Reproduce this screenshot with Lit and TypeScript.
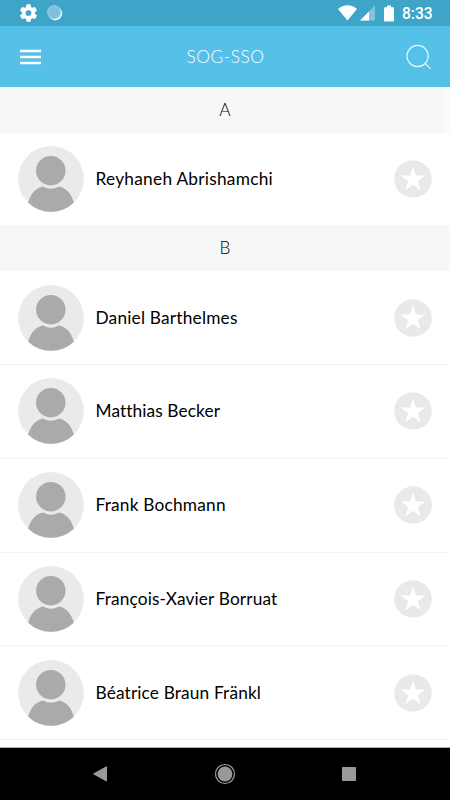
import { LitElement, html, css, svg } from "lit";
import { customElement, property } from "lit/decorators.js";
import { styleMap } from "lit/directives/style-map.js";

interface Person {
  name: string;
  tracking: number;
}

interface Section {
  letter: string;
  people: Person[];
}

const SECTIONS: Section[] = [
  { letter: "A", people: [{ name: "Reyhaneh Abrishamchi", tracking: 0.26 }] },
  {
    letter: "B",
    people: [
      { name: "Daniel Barthelmes", tracking: 0.2 },
      { name: "Matthias Becker", tracking: 0.1 },
      { name: "Frank Bochmann", tracking: 0.2 },
      { name: "François-Xavier Borruat", tracking: 0.14 },
      { name: "Béatrice Braun Fränkl", tracking: 0.14 },
    ],
  },
];

const dottedRing = svg`<circle cx="7.1" cy="7.1" r="6.4" fill="none" stroke="#b5dcea" stroke-width="1" stroke-dasharray="1 .8"/>`;

@customElement("status-bar")
export class StatusBar extends LitElement {
  static styles = css`
    :host {
      display: flex;
      align-items: center;
      justify-content: space-between;
      height: 26px;
      box-sizing: border-box;
      padding: 0 17px 0 20px;
      background: #3ea5c9;
      color: #fff;
    }
    .group {
      display: flex;
      align-items: center;
    }
    svg {
      display: block;
    }
    .sync {
      margin-left: 10px;
    }
    .signal {
      margin-left: 3px;
    }
    .battery {
      margin-left: 9px;
    }
    .clock {
      margin-left: 8px;
      width: 31px;
      font: 500 15.6px/26px Roboto, sans-serif;
      white-space: nowrap;
      padding-top: 2px;
    }
  `;

  render() {
    return html`
      <div class="group">
        <svg width="17" height="18" viewBox="2.2 1.6 19.6 20.8">
          <path fill="#fff" d="M19.43 12.98c.04-.32.07-.64.07-.98s-.03-.66-.07-.98l2.11-1.65c.19-.15.24-.42.12-.64l-2-3.46c-.12-.22-.39-.3-.61-.22l-2.49 1c-.52-.4-1.08-.73-1.69-.98l-.38-2.65C14.46 2.18 14.25 2 14 2h-4c-.25 0-.46.18-.49.42l-.38 2.65c-.61.25-1.17.59-1.69.98l-2.49-1c-.23-.09-.49 0-.61.22l-2 3.46c-.13.22-.07.49.12.64l2.11 1.65c-.04.32-.07.65-.07.98s.03.66.07.98l-2.11 1.65c-.19.15-.24.42-.12.64l2 3.46c.12.22.39.3.61.22l2.49-1c.52.4 1.08.73 1.69.98l.38 2.65c.03.24.24.42.49.42h4c.25 0 .46-.18.49-.42l.38-2.65c.61-.25 1.17-.59 1.69-.98l2.49 1c.23.09.49 0 .61-.22l2-3.46c.12-.22.07-.49-.12-.64l-2.11-1.65zM12 15.3a3.3 3.3 0 1 1 0-6.6 3.3 3.3 0 0 1 0 6.6z"/>
        </svg>
        <svg class="sync" width="16" height="16" viewBox="0 0 16 16">
          <circle cx="8.2" cy="8.4" r="7" fill="#e9f6fa"/>
          <circle cx="7.1" cy="7.1" r="6.9" fill="#7fc1da"/>
          ${dottedRing}
        </svg>
      </div>
      <div class="group">
        <svg width="19" height="16" viewBox="0 0 19 16">
          <path fill="#fff" d="M9.5 15.5 0 3.9C2.5 1.6 6 .2 9.5.2S16.500 1.600 19 3.900Z"/>
        </svg>
        <svg class="signal" width="15" height="16" viewBox="0 0 15 16">
          <path fill="#83c4dc" d="M15 .5V15.500H0Z"/>
          <path fill="#fff" d="M9 6.500V15.500H0Z"/>
        </svg>
        <svg class="battery" width="10" height="17" viewBox="0 0 10 17">
          <path fill="#fff" d="M3 .5h4v1.700h2q1 0 1 1V15.500q0 1-1 1H1q-1 0-1-1V3.200q0-1 1-1h2Z"/>
        </svg>
        <div class="clock">8:33</div>
      </div>
    `;
  }
}

@customElement("title-bar")
export class TitleBar extends LitElement {
  @property() heading = "";

  static styles = css`
    :host {
      display: grid;
      grid-template-columns: 40px 1fr 40px;
      align-items: center;
      height: 61px;
      box-sizing: border-box;
      padding: 0 19px 0 20px;
      background: #55c1e8;
    }
    svg {
      display: block;
    }
    .find {
      justify-self: end;
    }
    .heading {
      text-align: center;
      color: #fff;
      font: 300 17.3px/24px Lato, sans-serif;
      letter-spacing: 0.55px;
    }
  `;

  render() {
    return html`
      <svg width="21" height="16" viewBox="0 0 21 16">
        <path fill="#fff" d="M0 .8h21v2.400H0zM0 6.800h21v2.400H0zM0 12.800h21v2.400H0z"/>
      </svg>
      <div class="heading">${this.heading}</div>
      <svg class="find" width="25" height="26" viewBox="0 0 25 26" fill="none" stroke="#e6f6fc" stroke-width="1.100">
        <circle cx="11.600" cy="12" r="10.600"/>
        <path d="m19.100 19.400 5.500 5.400"/>
      </svg>
    `;
  }
}

@customElement("person-row")
export class PersonRow extends LitElement {
  @property({ attribute: false }) person!: Person;

  static styles = css`
    :host {
      display: flex;
      align-items: center;
      box-sizing: border-box;
      padding: 0 18px 0 17.500px;
      background: #fff;
    }
    svg {
      display: block;
      flex: none;
    }
    .name {
      flex: 1;
      margin-left: 12px;
      color: #000;
      font: 400 17.300px/24px Lato, sans-serif;
      white-space: nowrap;
    }
  `;

  render() {
    return html`
      <svg width="66" height="66" viewBox="0 0 66 66">
        <circle cx="33" cy="33" r="32.900" fill="#eaeaec"/>
        <circle cx="32.800" cy="24.700" r="14.700" fill="#aaaaac"/>
        <path fill="#aaaaac" d="M10.200 56.700C12.200 48.500 17.500 42 25 40.500q8 4.400 16 0c7.500 1.500 12.800 8 14.800 16.200A33 33 0 0 1 10.200 56.700Z"/>
      </svg>
      <div class="name" style=${styleMap({ letterSpacing: `${this.person.tracking}px` })}>${this.person.name}</div>
      <svg width="38" height="38" viewBox="0 0 38 38">
        <circle cx="19" cy="19" r="18.800" fill="#e9e9e9"/>
        <path fill="#fff" d="m19 6.600 3 8.900 9.300.1-7.500 5.600 2.800 9-7.600-5.400-7.600 5.400 2.800-9-7.500-5.600 9.300-.1Z"/>
      </svg>
    `;
  }
}

@customElement("nav-bar")
export class NavBar extends LitElement {
  static styles = css`
    :host {
      display: flex;
      align-items: center;
      justify-content: space-between;
      height: 53px;
      box-sizing: border-box;
      padding: 0 94px 0 93px;
      border-top: 1px solid #aaa;
      background: #000;
    }
    svg {
      display: block;
    }
  `;

  render() {
    return html`
      <svg width="14" height="16" viewBox="0 0 14 16">
        <path fill="#999" d="M.8 7.300 13 .4q1-.4 1 .6v13.700q0 1-1 .6L.8 8.500q-1-.6 0-1.200Z"/>
      </svg>
      <svg width="22" height="22" viewBox="0 0 22 22">
        <circle cx="11" cy="11" r="9.500" fill="none" stroke="#999" stroke-width="1.200"/>
        <circle cx="11" cy="11" r="7.400" fill="#999"/>
      </svg>
      <svg width="14" height="14" viewBox="0 0 14 14">
        <rect width="14" height="14" rx=".8" fill="#999"/>
      </svg>
    `;
  }
}

@customElement("app-root")
export class AppRoot extends LitElement {
  static styles = css`
    :host {
      display: flex;
      flex-direction: column;
      height: 800px;
      overflow: hidden;
      background: #fff;
    }
    status-bar,
    title-bar,
    nav-bar {
      flex: none;
    }
    .list {
      flex: 1;
      min-height: 0;
      overflow: hidden;
    }
    .letter {
      height: 46px;
      background: #f7f7f7;
      color: #000;
      text-align: center;
      font: 300 17.300px/45px Lato, sans-serif;
    }
    .first {
      background: linear-gradient(90deg, #f7f7f7 445px, #fbfbfb 445px);
    }
    person-row {
      height: 93.750px;
      border-bottom: 1px solid #f4f4f4;
    }
    person-row.last {
      height: 92.300px;
      border-bottom: none;
      padding-bottom: 1px;
    }
  `;

  render() {
    return html`
      <status-bar></status-bar>
      <title-bar heading="SOG-SSO"></title-bar>
      <div class="list">
        ${SECTIONS.map(
          (section, i) => html`
            <div class="letter ${i === 0 ? "first" : ""}">${section.letter}</div>
            ${section.people.map(
              (person) => html`<person-row class=${i === 0 ? "last" : ""} .person=${person}></person-row>`
            )}
          `
        )}
      </div>
      <nav-bar></nav-bar>
    `;
  }
}
